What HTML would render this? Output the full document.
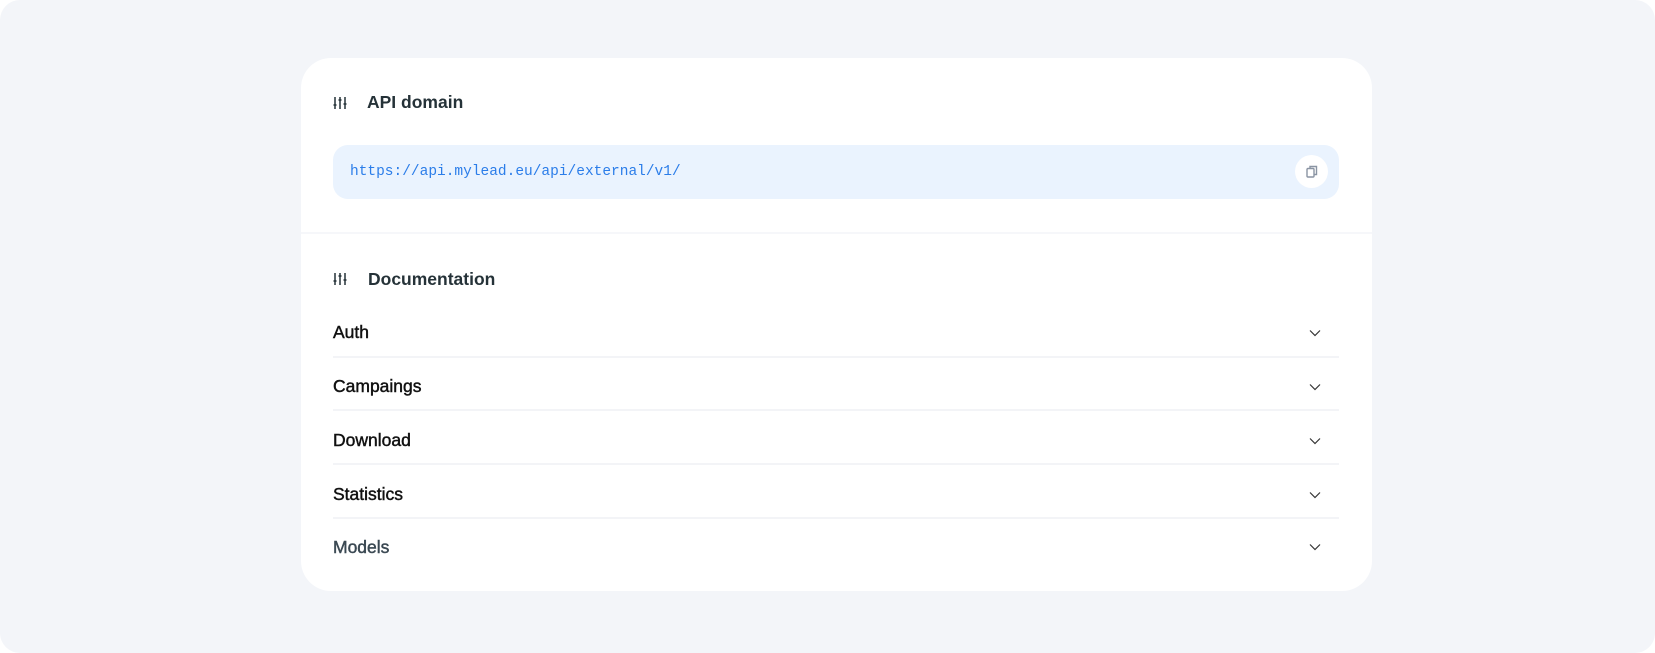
<!DOCTYPE html>
<html><head><meta charset="utf-8"><style>
*{box-sizing:border-box;margin:0;padding:0}
html,body{width:1655px;height:653px;background:#fff;overflow:hidden}
.outer{position:absolute;left:0;top:0;width:1655px;height:653px;background:#f3f5f9;border-radius:20px}
.card{position:absolute;left:301px;top:58px;width:1071px;height:533px;background:#fff;border-radius:30px}
.t{position:absolute;font-family:"Liberation Sans",sans-serif}
.h{font-weight:700;font-size:17.5px;color:#253238}
.ico{position:absolute}
.url{position:absolute;left:32px;top:87px;width:1006px;height:54px;background:#eaf3fe;border-radius:15px}
.url span{position:absolute;left:17px;top:19px;font-family:"Liberation Mono",monospace;font-size:14.5px;color:#2b7de9}
.copy{position:absolute;left:962px;top:10px;width:33px;height:33px;border-radius:50%;background:#fff}
.div{position:absolute;left:0;top:174px;width:1071px;height:2px;background:#f6f7fa}
.row{position:absolute;left:32px;width:1006px;height:2px;background:#f3f4f7}
.lbl{position:absolute;left:333px;font-family:"Liberation Sans",sans-serif;font-size:17.5px;font-weight:400;-webkit-text-stroke:0.45px currentColor;color:#111}
.chev{position:absolute;left:1309px}
</style></head><body>
<div class="outer"></div>
<div class="card">
  <svg class="ico" style="left:32px;top:38px" width="14" height="14" viewBox="0 0 14 14" fill="none" stroke="#253238" stroke-width="1.5"><path d="M2 1v12M7 1v12M12 1v12M0.5 9h3M5.5 4h3M10.5 8h3"/></svg>
  <div class="t h" style="left:66px;top:34px">API domain</div>
  <div class="url"><span>https://api.mylead.eu/api/external/v1/</span>
    <div class="copy"><svg style="position:absolute;left:11px;top:10px" width="12" height="13" viewBox="0 0 12 13" fill="none" stroke="#8a94a3" stroke-width="1.4"><rect x="1" y="3.5" width="7" height="8.5" rx="1"/><path d="M4 3.5V1.5h6.5v8H8"/></svg></div>
  </div>
  <div class="div"></div>
  <svg class="ico" style="left:32px;top:214px" width="14" height="14" viewBox="0 0 14 14" fill="none" stroke="#253238" stroke-width="1.5"><path d="M2 1v12M7 1v12M12 1v12M0.5 9h3M5.5 4h3M10.5 8h3"/></svg>
  <div class="t h" style="left:67px;top:211px">Documentation</div>
  <div class="row" style="top:298px"></div>
  <div class="row" style="top:351px"></div>
  <div class="row" style="top:405px"></div>
  <div class="row" style="top:459px"></div>
</div>
<div class="lbl" style="top:322px">Auth</div>
<div class="lbl" style="top:376px">Campaings</div>
<div class="lbl" style="top:430px">Download</div>
<div class="lbl" style="top:484px">Statistics</div>
<div class="lbl" style="top:537px;color:#3a4852">Models</div>
<svg class="chev" style="top:329px" width="12" height="8" viewBox="0 0 12 8" fill="none" stroke="#333" stroke-width="1.2"><path d="M1 1.5l5 5 5-5"/></svg>
<svg class="chev" style="top:383px" width="12" height="8" viewBox="0 0 12 8" fill="none" stroke="#333" stroke-width="1.2"><path d="M1 1.5l5 5 5-5"/></svg>
<svg class="chev" style="top:437px" width="12" height="8" viewBox="0 0 12 8" fill="none" stroke="#333" stroke-width="1.2"><path d="M1 1.5l5 5 5-5"/></svg>
<svg class="chev" style="top:491px" width="12" height="8" viewBox="0 0 12 8" fill="none" stroke="#333" stroke-width="1.2"><path d="M1 1.5l5 5 5-5"/></svg>
<svg class="chev" style="top:543px" width="12" height="8" viewBox="0 0 12 8" fill="none" stroke="#333" stroke-width="1.2"><path d="M1 1.5l5 5 5-5"/></svg>
</body></html>
